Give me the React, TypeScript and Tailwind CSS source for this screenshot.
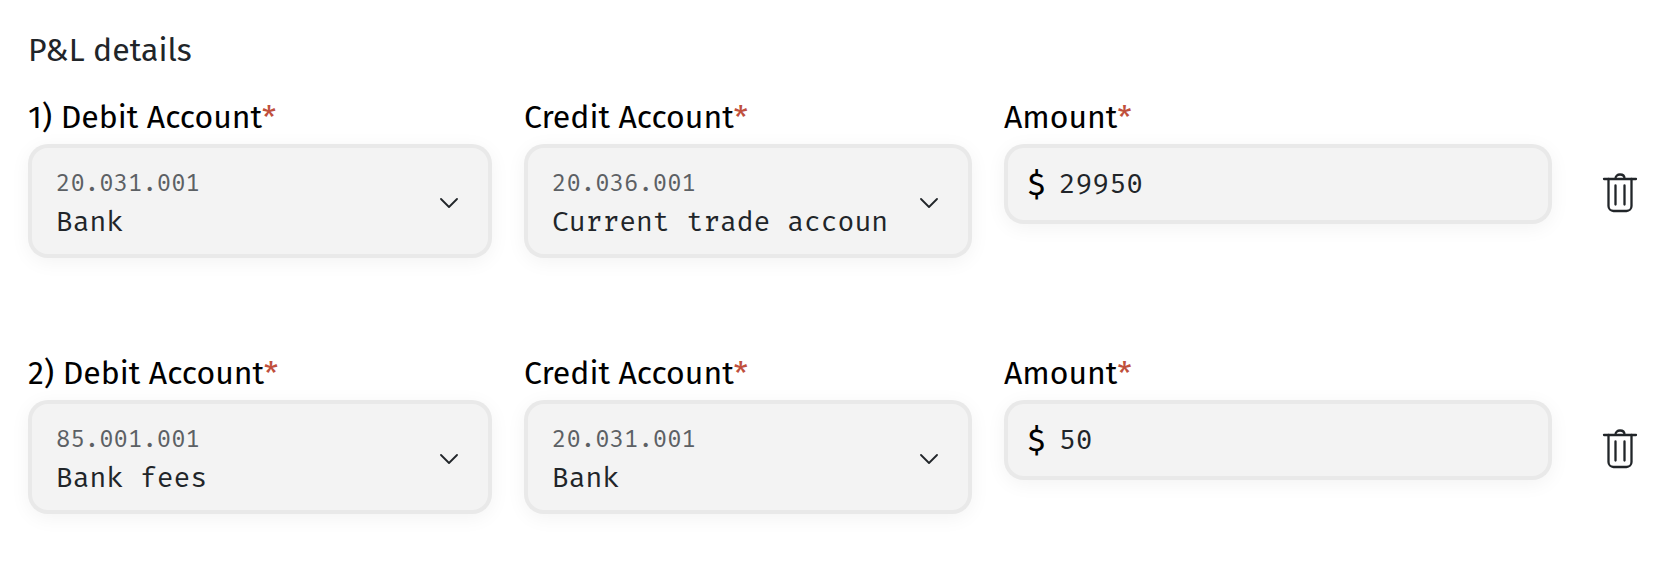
import { useState } from "react";

type Entry = {
  id: number;
  debit: string;
  credit: string;
  amount: string;
};

const accounts = [
  { code: "20.031.001", name: "Bank" },
  { code: "20.036.001", name: "Current trade accoun" },
  { code: "85.001.001", name: "Bank fees" },
];

const initialEntries: Entry[] = [
  { id: 1, debit: "20.031.001", credit: "20.036.001", amount: "29950" },
  { id: 2, debit: "85.001.001", credit: "20.031.001", amount: "50" },
];

const boxClass =
  "flex items-center rounded-[20px] border-4 border-black/4 bg-[#f3f3f3] shadow-[0_4px_20px_rgba(0,0,0,0.05)]";

const monoClass = "font-['Fira_Mono','Liberation_Mono',monospace]";

function FieldLabel({ htmlFor, text }: { htmlFor: string; text: string }) {
  return (
    <label
      htmlFor={htmlFor}
      className="mb-[10px] block whitespace-nowrap text-[32px] leading-[34px] text-black"
    >
      {text}
      <span className="text-[#c0503c]">*</span>
    </label>
  );
}

function ChevronIcon() {
  return (
    <svg
      className="pointer-events-none mt-1 h-[10px] w-[18px] shrink-0"
      viewBox="0 0 18 10"
      fill="none"
      stroke="#212529"
      strokeWidth="1.8"
      strokeLinecap="round"
      strokeLinejoin="round"
    >
      <path d="M1 1l8 8 8-8" />
    </svg>
  );
}

function TrashIcon() {
  return (
    <svg
      className="h-10 w-9"
      viewBox="0 0 36 40"
      fill="none"
      stroke="#212529"
      strokeWidth="2.3"
      strokeLinecap="round"
      strokeLinejoin="round"
    >
      <path d="M2 6h32" />
      <path d="M13.5 5.5c0-2.6 2-4 4.5-4s4.5 1.4 4.5 4" />
      <path d="M6.5 6v27a5 5 0 0 0 5 5h13a5 5 0 0 0 5-5V6" />
      <path d="M13.5 12.5v19M22.5 12.5v19" />
    </svg>
  );
}

type AccountSelectProps = {
  id: string;
  label: string;
  value: string;
  onChange: (value: string) => void;
};

function AccountSelect({ id, label, value, onChange }: AccountSelectProps) {
  return (
    <div className="min-w-0">
      <FieldLabel htmlFor={id} text={label} />
      <div className={`${boxClass} gap-7 pr-[30px] pl-6`}>
        <div className={`min-w-0 flex-1 pt-4 pb-3 ${monoClass}`}>
          <div className="text-2xl leading-[38px] text-[#5c6064]">{value}</div>
          <select
            id={id}
            value={value}
            onChange={(e) => onChange(e.target.value)}
            className="block h-10 w-full appearance-none bg-transparent text-[28px] leading-10 text-[#212529] outline-none"
          >
            {accounts.map((account) => (
              <option key={account.code} value={account.code}>
                {account.name}
              </option>
            ))}
          </select>
        </div>
        <ChevronIcon />
      </div>
    </div>
  );
}

export default function App() {
  const [entries, setEntries] = useState(initialEntries);

  const update = (id: number, patch: Partial<Entry>) => {
    setEntries(entries.map((e) => (e.id === id ? { ...e, ...patch } : e)));
  };

  return (
    <main className="bg-white px-7 pt-8 pb-12 font-['Fira_Sans','Noto_Sans',sans-serif]">
      <h2 className="mb-8 text-[32px] leading-9 text-[#212529]">P&amp;L details</h2>

      <div className="flex flex-col gap-[98px]">
        {entries.map((entry, index) => (
          <div key={entry.id} className="flex items-center gap-10">
            <div className="grid min-w-0 flex-1 grid-cols-[116fr_112fr_137fr] gap-8">
              <AccountSelect
                id={`debit-${entry.id}`}
                label={`${index + 1}) Debit Account`}
                value={entry.debit}
                onChange={(debit) => update(entry.id, { debit })}
              />
              <AccountSelect
                id={`credit-${entry.id}`}
                label="Credit Account"
                value={entry.credit}
                onChange={(credit) => update(entry.id, { credit })}
              />
              <div className="min-w-0">
                <FieldLabel htmlFor={`amount-${entry.id}`} text="Amount" />
                <div className={`${boxClass} h-20 gap-[14px] px-5`}>
                  <span className="text-[32px] leading-9 text-black">$</span>
                  <input
                    id={`amount-${entry.id}`}
                    type="text"
                    inputMode="decimal"
                    value={entry.amount}
                    onChange={(e) => update(entry.id, { amount: e.target.value })}
                    className={`h-10 w-full min-w-0 bg-transparent text-[28px] leading-10 text-[#212529] outline-none ${monoClass}`}
                  />
                </div>
              </div>
            </div>
            <button
              type="button"
              aria-label={`Delete row ${index + 1}`}
              onClick={() => setEntries(entries.filter((e) => e.id !== entry.id))}
              className="mt-7 flex h-14 w-14 items-center justify-center"
            >
              <TrashIcon />
            </button>
          </div>
        ))}
      </div>
    </main>
  );
}
